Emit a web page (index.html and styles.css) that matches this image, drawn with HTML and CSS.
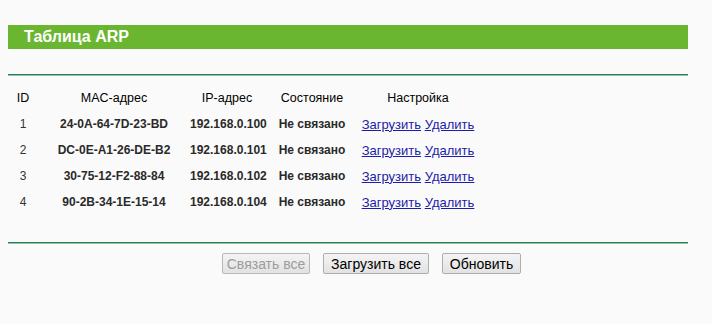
FILE: index.html
```html
<!DOCTYPE html>
<html lang="ru">
<head>
    <meta charset="UTF-8">
    <title>Таблица ARP</title>
    <link rel="stylesheet" href="styles.css">
</head>
<body>
    <div class="panel">
        <div class="title">Таблица ARP</div>
        <div class="rule"></div>
        <div class="arp-table">
            <div class="row head">
                <div class="cell">ID</div>
                <div class="cell">MAC-адрес</div>
                <div class="cell">IP-адрес</div>
                <div class="cell">Состояние</div>
                <div class="cell">Настройка</div>
            </div>
            <div class="row">
                <div class="cell num">1</div>
                <div class="cell">24-0A-64-7D-23-BD</div>
                <div class="cell">192.168.0.100</div>
                <div class="cell">Не связано</div>
                <div class="cell links"><a href="#">Загрузить</a> <a href="#">Удалить</a></div>
            </div>
            <div class="row">
                <div class="cell num">2</div>
                <div class="cell">DC-0E-A1-26-DE-B2</div>
                <div class="cell">192.168.0.101</div>
                <div class="cell">Не связано</div>
                <div class="cell links"><a href="#">Загрузить</a> <a href="#">Удалить</a></div>
            </div>
            <div class="row">
                <div class="cell num">3</div>
                <div class="cell">30-75-12-F2-88-84</div>
                <div class="cell">192.168.0.102</div>
                <div class="cell">Не связано</div>
                <div class="cell links"><a href="#">Загрузить</a> <a href="#">Удалить</a></div>
            </div>
            <div class="row">
                <div class="cell num">4</div>
                <div class="cell">90-2B-34-1E-15-14</div>
                <div class="cell">192.168.0.104</div>
                <div class="cell">Не связано</div>
                <div class="cell links"><a href="#">Загрузить</a> <a href="#">Удалить</a></div>
            </div>
        </div>
        <div class="rule bottom"></div>
        <div class="actions">
            <button class="btn-bind" disabled>Связать все</button>
            <button class="btn-load">Загрузить все</button>
            <button class="btn-refresh">Обновить</button>
        </div>
    </div>
</body>
</html>
```

FILE: styles.css
```css
body {
    margin: 0;
    background-color: #fafafa;
    font-family: "Liberation Sans", Arial, sans-serif;
    color: #000;
}

.panel {
    width: 680px;
    margin-left: 8px;
    padding-top: 25px;
}

.title {
    height: 24px;
    line-height: 24px;
    padding-left: 16px;
    background-color: #6ab630;
    color: #fff;
    font-size: 16px;
    font-weight: bold;
}

.rule {
    margin-top: 25px;
    border-top: 1px solid #2d7a58;
    border-bottom: 1px solid #8cc7a8;
}

.rule.bottom {
    margin-top: 27px;
}

.arp-table {
    padding-top: 9px;
}

.row {
    display: grid;
    grid-template-columns: 30px 152px 74px 96px 116px;
    height: 26px;
    align-items: center;
    font-size: 12px;
}

.row .cell {
    text-align: center;
    white-space: nowrap;
    font-weight: bold;
    color: #2a2a2a;
}

.row.head .cell {
    font-size: 12.5px;
    font-weight: normal;
    color: #000;
}

.row .cell.num {
    font-weight: normal;
    color: #333;
}

.row .cell.links {
    font-size: 13px;
    font-weight: normal;
}

.links a {
    color: #1c1caa;
    text-decoration: underline;
}

.actions {
    display: flex;
    gap: 13px;
    padding-left: 214px;
    margin-top: 9px;
}

.actions button {
    height: 21px;
    padding: 0;
    font-family: "Liberation Sans", Arial, sans-serif;
    font-size: 14px;
    color: #000;
    border: 1px solid #adadad;
    border-radius: 2px;
    background: linear-gradient(#f4f4f4, #e2e2e2);
}

.actions .btn-bind {
    width: 88px;
}

.actions .btn-load {
    width: 106px;
}

.actions .btn-refresh {
    width: 79px;
}

.actions button:disabled {
    color: #9c9c9c;
    border-color: #b8b8b8;
}
```
